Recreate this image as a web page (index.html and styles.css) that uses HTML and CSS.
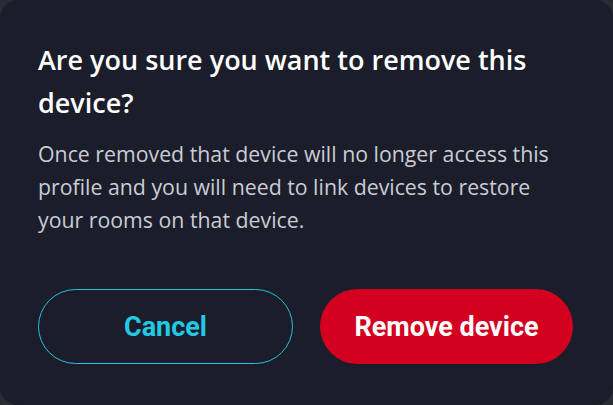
FILE: index.html
```html
<!DOCTYPE html>
<html lang="en">
<head>
    <meta charset="UTF-8">
    <meta name="viewport" content="width=device-width, initial-scale=1.0">
    <title>Remove device</title>
    <link rel="stylesheet" href="styles.css">
</head>
<body>
    <!-- confirm dialog -->
    <div class="dialog">
        <h2 class="dialog-title">Are you sure you want to remove this device?</h2>
        <p class="dialog-text">Once removed that device will no longer access this profile and you will need to link devices to restore your rooms on that device.</p>
        <div class="dialog-actions">
            <button class="btn btn-outline">Cancel</button>
            <button class="btn btn-danger">Remove device</button>
        </div>
    </div>
</body>
</html>
```

FILE: styles.css
```css
html, body {
    margin: 0;
    padding: 0;
    height: 100%;
}

body {
    background: #2a2c33;
    font-family: "Open Sans", "Noto Sans", sans-serif;
}

.dialog {
    box-sizing: border-box;
    height: 100%;
    background: #1b1d2a;
    border-radius: 18px;
    padding: 38px 40px 0 38px;
    display: flex;
    flex-direction: column;
}

.dialog-title {
    margin: 0;
    color: #ffffff;
    font-size: 27px;
    font-weight: 600;
    line-height: 43px;
}

.dialog-text {
    margin: 13px 0 0 0;
    color: #c9ccd6;
    font-size: 21.3px;
    line-height: 33px;
}

.dialog-actions {
    display: flex;
    gap: 27px;
    margin-top: 53px;
}

.btn {
    flex: 1;
    height: 75px;
    border-radius: 38px;
    font-family: Roboto, "Noto Sans", sans-serif;
    font-size: 27px;
    font-weight: 700;
    cursor: pointer;
}

.btn-outline {
    background: transparent;
    border: 1px solid #22c4dc;
    color: #22c9e3;
}

.btn-danger {
    background: #d4001f;
    border: none;
    color: #ffffff;
}
```
